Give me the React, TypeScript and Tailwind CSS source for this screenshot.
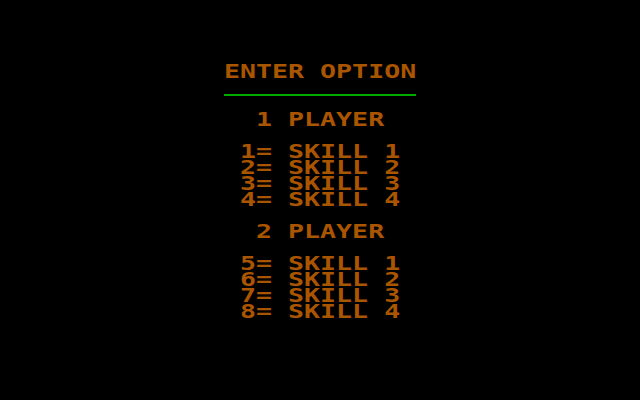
const Line = ({ text }: { text: string }) => (
  <div className="h-[16px] whitespace-pre">
    <span className="inline-block origin-left scale-x-[1.33] -translate-y-px">{text}</span>
  </div>
);

const Gap = () => <div className="h-[16px]" />;

export default function App() {
  return (
    <div className="w-[640px] h-[400px] bg-black flex justify-center overflow-hidden">
      <div className="w-[192px] pt-[64px] font-['DejaVu_Sans_Mono',monospace] font-bold text-[20px] leading-[16px] text-[#aa5500]">
        <Line text="ENTER OPTION" />
        <div className="h-[14px]" />
        <div className="h-[2px] bg-[#00aa00]" />
        <Gap />
        <Line text="  1 PLAYER" />
        <Gap />
        <Line text=" 1= SKILL 1" />
        <Line text=" 2= SKILL 2" />
        <Line text=" 3= SKILL 3" />
        <Line text=" 4= SKILL 4" />
        <Gap />
        <Line text="  2 PLAYER" />
        <Gap />
        <Line text=" 5= SKILL 1" />
        <Line text=" 6= SKILL 2" />
        <Line text=" 7= SKILL 3" />
        <Line text=" 8= SKILL 4" />
      </div>
    </div>
  );
}
